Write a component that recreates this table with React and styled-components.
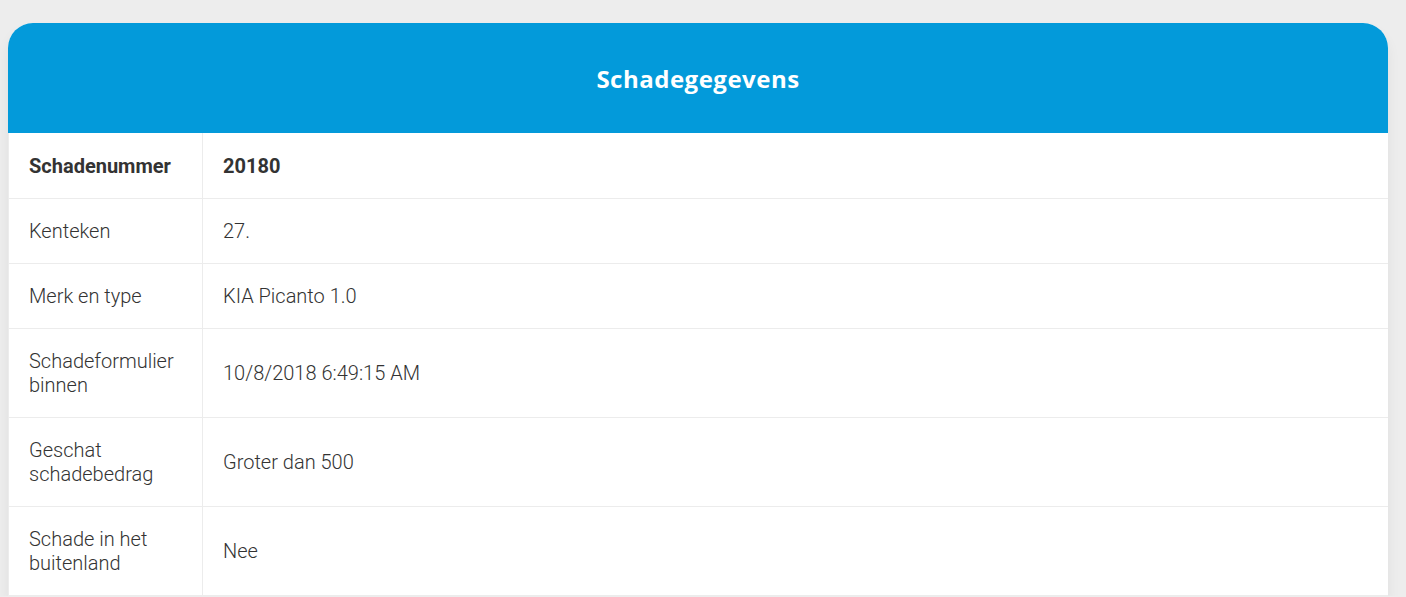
import React from "react";
import styled, { createGlobalStyle } from "styled-components";

const rows = [
  { label: "Schadenummer", value: "20180", strong: true },
  { label: "Kenteken", value: "27." },
  { label: "Merk en type", value: "KIA Picanto 1.0" },
  { label: "Schadeformulier binnen", value: "10/8/2018 6:49:15 AM" },
  { label: "Geschat schadebedrag", value: "Groter dan 500" },
  { label: "Schade in het buitenland", value: "Nee" },
];

function App() {
  return (
    <>
      <GlobalStyle />
      <Card>
        <Header>
          <Title>Schadegegevens</Title>
        </Header>
        <Table>
          <tbody>
            {rows.map((row) => (
              <Row key={row.label}>
                <LabelCell $strong={row.strong}>{row.label}</LabelCell>
                <ValueCell $strong={row.strong}>{row.value}</ValueCell>
              </Row>
            ))}
          </tbody>
        </Table>
      </Card>
    </>
  );
}

const GlobalStyle = createGlobalStyle`
  body {
    margin: 0;
    background: #ededed;
    font-family: Roboto, "Liberation Sans", sans-serif;
    overflow: hidden;
  }
`;

const Card = styled.div`
  width: 1380px;
  margin: 23px 0 0 8px;
  background: #fff;
  border-radius: 25px 25px 0 0;
  box-shadow: 0 8px 14px rgba(0, 0, 0, 0.06);
`;

const Header = styled.div`
  height: 110px;
  background: #039ada;
  border-radius: 25px 25px 0 0;
  display: flex;
  align-items: center;
  justify-content: center;
`;

const Title = styled.h2`
  margin: 0;
  color: #fff;
  font-family: "Open Sans", "Noto Sans", sans-serif;
  font-weight: 700;
  font-size: 24px;
  letter-spacing: 0.5px;
`;

const Table = styled.table`
  width: 100%;
  border-collapse: collapse;
  table-layout: fixed;
  border-top: 1px solid #fff;
`;

const Row = styled.tr`
  border-bottom: 1px solid #ececec;
`;

const Cell = styled.td`
  padding: 20px;
  font-size: 20px;
  line-height: 24px;
  color: #333;
  font-weight: ${(p) => (p.$strong ? 700 : 300)};
  vertical-align: middle;
`;

const LabelCell = styled(Cell)`
  width: 153px;
  border-left: 1px solid #ececec;
  border-right: 1px solid #ececec;
`;

const ValueCell = styled(Cell)``;

export default App;
